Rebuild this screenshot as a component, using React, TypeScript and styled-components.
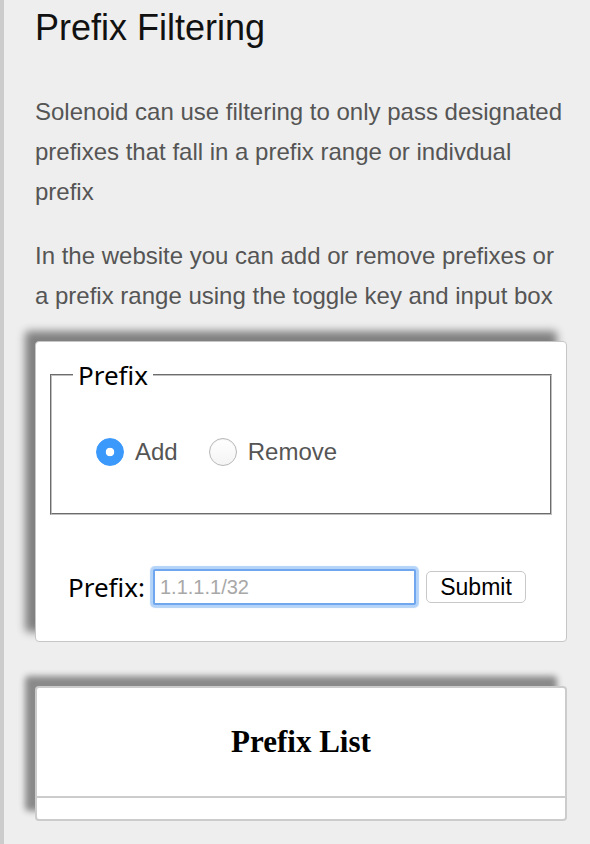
import React, { useState } from 'react';
import styled, { createGlobalStyle } from 'styled-components';

const GlobalStyle = createGlobalStyle`
  html, body {
    margin: 0;
    padding: 0;
    background: #eeeeee;
  }
`;

const Page = styled.div`
  min-height: 100vh;
  box-sizing: border-box;
  border-left: 4px solid #cccccc;
  padding: 6px 23px 20px 31px;
  font-family: "Liberation Sans", Arial, sans-serif;
`;

const Title = styled.h1`
  margin: 0;
  font-size: 36px;
  line-height: 44px;
  font-weight: normal;
  color: #111;
`;

const Text = styled.p<{ first?: boolean }>`
  margin: ${({ first }) => (first ? '42px' : '24px')} 0 0;
  font-size: 24px;
  line-height: 40px;
  color: #555;
`;

const Card = styled.form`
  margin-top: 25px;
  padding: 15px 14px 14px;
  background: #fff;
  border: 1px solid #c6c6c6;
  border-radius: 4px;
  box-shadow: -10px -10px 8px #808080;
`;

const Group = styled.fieldset`
  margin: 0;
  padding: 0;
  min-width: 0;
  border: 2px groove #c0c0c0;
`;

const GroupTitle = styled.legend`
  margin-left: 21px;
  padding: 0 5px;
  font-family: "Noto Sans", sans-serif;
  font-size: 26px;
  color: #000;
`;

const RadioRow = styled.div`
  display: flex;
  align-items: center;
  height: 28px;
  padding: 45px 0 47px 44px;
`;

const Option = styled.label`
  display: flex;
  align-items: center;
  gap: 11px;
  margin-right: 31px;
  font-size: 24px;
  color: #555;
  cursor: pointer;
`;

const Radio = styled.input`
  appearance: none;
  margin: 0;
  width: 28px;
  height: 28px;
  border-radius: 50%;
  box-sizing: border-box;
  border: 1px solid #b8b8b8;
  background: linear-gradient(#ffffff, #f4f4f4);
  box-shadow: inset 0 1px 1px rgba(0, 0, 0, 0.06);

  &:checked {
    border-color: #3b99fc;
    background: radial-gradient(circle, #ffffff 0 4px, #3b99fc 4.6px);
    box-shadow: none;
  }
`;

const EntryRow = styled.div`
  display: flex;
  align-items: center;
  height: 36px;
  margin: 54px 0 22px;
  padding-left: 18px;
`;

const EntryLabel = styled.label`
  font-family: "Noto Sans", sans-serif;
  font-size: 26px;
  color: #000;
  margin-right: 8px;
`;

const EntryInput = styled.input`
  box-sizing: border-box;
  width: 263px;
  height: 36px;
  margin-right: 10px;
  padding: 0 5px;
  border: 2px solid #6fa6ee;
  border-radius: 2px;
  outline: none;
  box-shadow: 0 0 1px 3px #b4d3f8;
  font-family: "Liberation Sans", Arial, sans-serif;
  font-size: 20px;
  color: #333;

  &::placeholder {
    color: #a8a8a8;
  }
`;

const SubmitButton = styled.button`
  box-sizing: border-box;
  width: 100px;
  height: 32px;
  padding: 0;
  background: #fff;
  border: 1px solid #c8c8c8;
  border-radius: 5px;
  font-family: "Liberation Sans", Arial, sans-serif;
  font-size: 23px;
  color: #000;
`;

const ListCard = styled.div`
  margin-top: 44px;
  background: #fff;
  border: 2px solid #cccccc;
  border-radius: 4px;
  box-shadow: -10px -10px 6px #8a8a8a;
`;

const ListHeader = styled.div`
  height: 108px;
  line-height: 108px;
  text-align: center;
  border-bottom: 2px solid #cccccc;
  font-family: "Liberation Serif", "Times New Roman", serif;
  font-size: 31px;
  font-weight: bold;
  color: #000;
`;

const ListBody = styled.div`
  height: 21px;
`;

export default function App() {
  const [mode, setMode] = useState<'add' | 'remove'>('add');
  const [prefix, setPrefix] = useState('');

  return (
    <>
      <GlobalStyle />
      <Page>
        <Title>Prefix Filtering</Title>
        <Text first>
          Solenoid can use filtering to only pass designated prefixes that fall in a prefix range or indivdual
          prefix
        </Text>
        <Text>
          In the website you can add or remove prefixes or a prefix range using the toggle key and input box
        </Text>

        <Card onSubmit={e => e.preventDefault()}>
          <Group>
            <GroupTitle>Prefix</GroupTitle>
            <RadioRow>
              <Option>
                <Radio type="radio" name="mode" checked={mode === 'add'} onChange={() => setMode('add')} />
                Add
              </Option>
              <Option>
                <Radio type="radio" name="mode" checked={mode === 'remove'} onChange={() => setMode('remove')} />
                Remove
              </Option>
            </RadioRow>
          </Group>
          <EntryRow>
            <EntryLabel htmlFor="prefix">Prefix:</EntryLabel>
            <EntryInput
              id="prefix"
              placeholder="1.1.1.1/32"
              value={prefix}
              onChange={e => setPrefix(e.target.value)}
            />
            <SubmitButton type="submit">Submit</SubmitButton>
          </EntryRow>
        </Card>

        <ListCard>
          <ListHeader>Prefix List</ListHeader>
          <ListBody />
        </ListCard>
      </Page>
    </>
  );
}
